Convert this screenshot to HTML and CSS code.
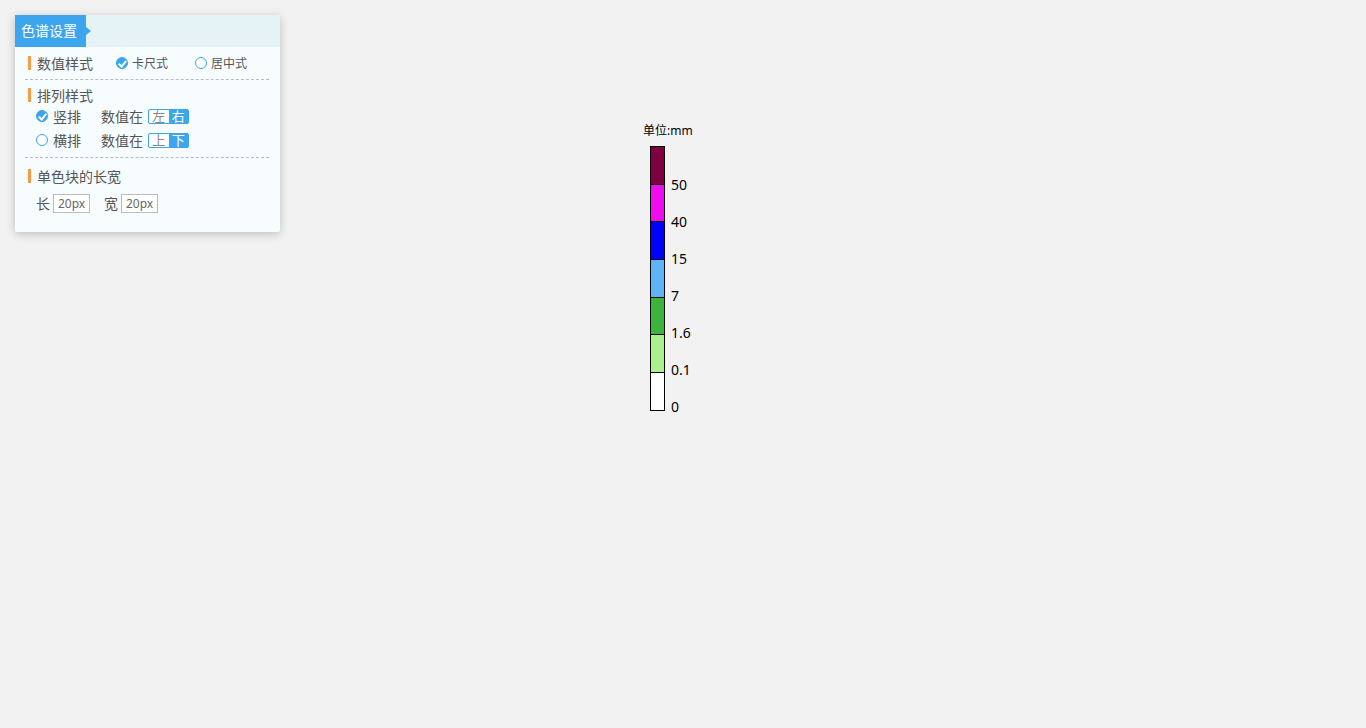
FILE: index.html
```html
<html>
<head>
<meta charset="utf-8">
<title>色谱设置</title>
<link rel="stylesheet" href="styles.css">
</head>
<body>
<div class="page">
  <div class="panel">
    <div class="panel-head">
      <span class="panel-title">色谱设置</span>
    </div>
    <div class="panel-body">
      <div class="group first">
        <div class="row">
          <span class="sec-title">数值样式</span>
          <span class="opt opt-first"><i class="check on"></i>卡尺式</span>
          <span class="opt opt-second"><i class="check"></i>居中式</span>
        </div>
      </div>
      <div class="group">
        <div class="sec-title">排列样式</div>
        <div class="line">
          <span class="opt big"><i class="check on"></i>竖排</span>
          <span class="pos-label">数值在</span>
          <span class="toggle"><span class="t-off">左</span><span class="t-on">右</span></span>
        </div>
        <div class="line">
          <span class="opt big"><i class="check"></i>横排</span>
          <span class="pos-label">数值在</span>
          <span class="toggle"><span class="t-off">上</span><span class="t-on">下</span></span>
        </div>
      </div>
      <div class="group last">
        <div class="sec-title">单色块的长宽</div>
        <div class="size-row">
          <span class="size-item">长<span class="size-box">20px</span></span>
          <span class="size-item">宽<span class="size-box">20px</span></span>
        </div>
      </div>
    </div>
  </div>

  <div class="legend">
    <div class="unit">单位:mm</div>
    <div class="legend-body">
      <div class="bar">
        <div class="seg" style="background:#7f0040"></div>
        <div class="seg" style="background:#f00cf0"></div>
        <div class="seg" style="background:#0000ff"></div>
        <div class="seg" style="background:#5eb4f8"></div>
        <div class="seg" style="background:#3cb43c"></div>
        <div class="seg" style="background:#aaf08c"></div>
        <div class="seg" style="background:#ffffff"></div>
      </div>
      <div class="labels">
        <div class="lab">50</div>
        <div class="lab">40</div>
        <div class="lab">15</div>
        <div class="lab">7</div>
        <div class="lab">1.6</div>
        <div class="lab">0.1</div>
        <div class="lab">0</div>
      </div>
    </div>
  </div>
</div>
</body>
</html>
```

FILE: styles.css
```css
body {
  margin: 0;
  background-color: #f2f2f2;
  font-family: "Noto Sans", "Noto Sans CJK SC", sans-serif;
}

.page {
  display: flex;
  align-items: flex-start;
  padding: 15px;
}

.panel {
  width: 265px;
  background-color: #f7fcfe;
  border-radius: 2px;
  box-shadow: 0 2px 10px rgba(0, 0, 0, 0.22);
}

.panel-head {
  height: 32px;
  background-color: #e5f3f7;
  display: flex;
  border-radius: 2px 2px 0 0;
}

.panel-title {
  position: relative;
  width: 71px;
  height: 32px;
  line-height: 32px;
  padding-left: 6px;
  box-sizing: border-box;
  background-color: #3ba6ee;
  color: #ffffff;
  font-size: 14px;
}

.panel-title:after {
  content: "";
  position: absolute;
  right: -5px;
  top: 12px;
  border-left: 5px solid #3ba6ee;
  border-top: 4px solid transparent;
  border-bottom: 4px solid transparent;
}

.panel-body {
  padding: 0 11px 0 10px;
}

.group {
  border-bottom: 1px dashed #b8bcbe;
  padding: 6px 0 5px 3px;
}

.group.first {
  padding-bottom: 7px;
}

.group.last {
  border-bottom: none;
  padding: 9px 0 19px 3px;
}

.row {
  display: flex;
  align-items: center;
  height: 19px;
}

.sec-title {
  display: flex;
  align-items: center;
  height: 18px;
  font-size: 14px;
  color: #555555;
}

.sec-title:before {
  content: "";
  width: 3px;
  height: 14px;
  background-color: #fb9a45;
  margin-right: 6px;
}

.opt {
  display: flex;
  align-items: center;
  font-size: 12px;
  color: #555555;
}

.opt-first {
  margin-left: 23px;
}

.opt-second {
  margin-left: 27px;
}

.opt.big {
  font-size: 14px;
  width: 65px;
}

.opt.big .check {
  margin-right: 5px;
}

.check {
  box-sizing: border-box;
  width: 12px;
  height: 12px;
  border: 1px solid #3ba6ee;
  border-radius: 50%;
  margin-right: 4px;
  position: relative;
  background-color: #ffffff;
}

.check.on {
  background-color: #3ba6ee;
}

.check.on:after {
  content: "";
  position: absolute;
  left: 3px;
  top: 1px;
  width: 3px;
  height: 6px;
  border-right: 2px solid #ffffff;
  border-bottom: 2px solid #ffffff;
  transform: rotate(40deg);
}

.line {
  display: flex;
  align-items: center;
  height: 24px;
  padding-left: 8px;
}

.pos-label {
  font-size: 14px;
  color: #555555;
  margin-right: 5px;
}

.toggle {
  display: flex;
  width: 41px;
  height: 15px;
  border: 1px solid #3ba6ee;
  border-radius: 2px;
  box-sizing: border-box;
  font-size: 13px;
  line-height: 13px;
  background-color: #3ba6ee;
}

.t-off, .t-on {
  width: 20px;
  text-align: center;
}

.t-off {
  background-color: #ffffff;
  color: #888888;
  border-radius: 1px 0 0 1px;
}

.t-on {
  color: #ffffff;
}

.size-row {
  display: flex;
  gap: 14px;
  padding: 8px 0 0 8px;
}

.size-item {
  display: flex;
  align-items: center;
  font-size: 14px;
  color: #555555;
}

.size-box {
  box-sizing: border-box;
  width: 37px;
  height: 19px;
  border: 1px solid #bbbbbb;
  background-color: #ffffff;
  margin-left: 3px;
  padding-left: 4px;
  font-size: 12px;
  line-height: 17px;
  color: #666666;
}

.legend {
  margin-left: 363px;
  margin-top: 108px;
}

.unit {
  font-size: 12px;
  color: #000000;
  height: 16px;
  line-height: 16px;
  margin-bottom: 7px;
}

.legend-body {
  display: flex;
  align-items: flex-start;
  margin-left: 7px;
}

.bar {
  width: 15px;
  border: 1px solid #000000;
  border-top: none;
  box-sizing: border-box;
}

.seg {
  height: 36.7px;
  border-top: 1px solid #000000;
}

.labels {
  margin-top: 30px;
  margin-left: 6px;
}

.lab {
  height: 37px;
  line-height: 18px;
  font-size: 14px;
  color: #000000;
}
```
